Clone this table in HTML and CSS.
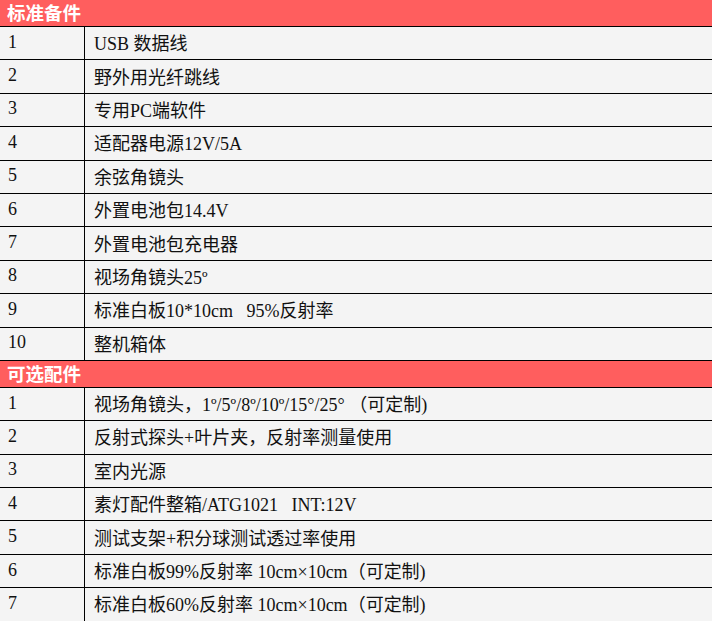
FILE: index.html
```html
<!DOCTYPE html>
<html lang="zh">
<head>
<meta charset="utf-8">
<link rel="stylesheet" href="styles.css">
</head>
<body>
<div class="sheet">
  <div class="head">标准备件</div>
  <div class="row"><div class="num">1</div><div class="txt">USB 数据线</div></div>
  <div class="row"><div class="num">2</div><div class="txt">野外用光纤跳线</div></div>
  <div class="row"><div class="num">3</div><div class="txt">专用PC端软件</div></div>
  <div class="row"><div class="num">4</div><div class="txt">适配器电源12V/5A</div></div>
  <div class="row"><div class="num">5</div><div class="txt">余弦角镜头</div></div>
  <div class="row"><div class="num">6</div><div class="txt">外置电池包14.4V</div></div>
  <div class="row"><div class="num">7</div><div class="txt">外置电池包充电器</div></div>
  <div class="row"><div class="num">8</div><div class="txt">视场角镜头25º</div></div>
  <div class="row"><div class="num">9</div><div class="txt">标准白板10*10cm&nbsp;&nbsp; 95%反射率</div></div>
  <div class="row"><div class="num">10</div><div class="txt">整机箱体</div></div>
  <div class="head">可选配件</div>
  <div class="row"><div class="num">1</div><div class="txt">视场角镜头，1º/5º/8º/10º/15°/25° （可定制)</div></div>
  <div class="row"><div class="num">2</div><div class="txt">反射式探头+叶片夹，反射率测量使用</div></div>
  <div class="row"><div class="num">3</div><div class="txt">室内光源</div></div>
  <div class="row"><div class="num">4</div><div class="txt">素灯配件整箱/ATG1021&nbsp;&nbsp; INT:12V</div></div>
  <div class="row"><div class="num">5</div><div class="txt">测试支架+积分球测试透过率使用</div></div>
  <div class="row"><div class="num">6</div><div class="txt">标准白板99%反射率 10cm×10cm（可定制)</div></div>
  <div class="row"><div class="num">7</div><div class="txt">标准白板60%反射率 10cm×10cm（可定制)</div></div>
</div>
</body>
</html>
```
FILE: styles.css
```css
html, body {
  margin: 0;
  padding: 0;
  background: #f4f4f4;
}
.sheet {
  width: 712px;
  font-family: "Liberation Serif", "Noto Sans CJK SC", serif;
  font-size: 18px;
  color: #111;
}
.head {
  box-sizing: border-box;
  height: 27px;
  background: #ff5e5e;
  border-bottom: 1px solid #000;
  color: #fff;
  font-family: "Noto Sans CJK SC", sans-serif;
  font-weight: bold;
  font-size: 18.5px;
  line-height: 25px;
  padding-left: 7px;
}
.row {
  box-sizing: border-box;
  height: 33.4px;
  display: flex;
  border-bottom: 1px solid #000;
}
.num {
  width: 85px;
  flex: none;
  border-right: 1px solid #000;
  padding-left: 8px;
  padding-bottom: 2px;
  box-sizing: border-box;
  display: flex;
  align-items: center;
}
.txt {
  padding-left: 9px;
  padding-bottom: 2px;
  display: flex;
  align-items: center;
  white-space: pre;
}
```
